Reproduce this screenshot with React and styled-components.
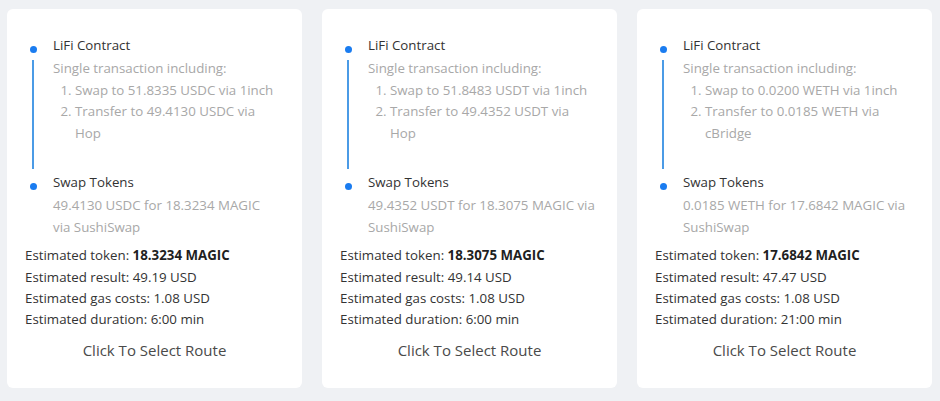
import React from "react";
import styled, { createGlobalStyle } from "styled-components";

const GlobalStyle = createGlobalStyle`
  html, body {
    margin: 0;
    padding: 0;
    background: #eff1f4;
    font-family: "Open Sans", "Noto Sans", sans-serif;
  }
`;

// lines are kept as they wrap in the design
const routes = [
  {
    swap: "51.8335 USDC",
    transfer: "49.4130 USDC",
    bridge: "Hop",
    tokens: ["49.4130 USDC for 18.3234 MAGIC", "via SushiSwap"],
    token: "18.3234 MAGIC",
    result: "49.19 USD",
    gas: "1.08 USD",
    duration: "6:00 min",
  },
  {
    swap: "51.8483 USDT",
    transfer: "49.4352 USDT",
    bridge: "Hop",
    tokens: ["49.4352 USDT for 18.3075 MAGIC via", "SushiSwap"],
    token: "18.3075 MAGIC",
    result: "49.14 USD",
    gas: "1.08 USD",
    duration: "6:00 min",
  },
  {
    swap: "0.0200 WETH",
    transfer: "0.0185 WETH",
    bridge: "cBridge",
    tokens: ["0.0185 WETH for 17.6842 MAGIC via", "SushiSwap"],
    token: "17.6842 MAGIC",
    result: "47.47 USD",
    gas: "1.08 USD",
    duration: "21:00 min",
  },
];

const RouteCard = ({ route }) => (
  <Card>
    <Steps>
      <Step>
        <Rail>
          <Dot />
          <Tail />
        </Rail>
        <StepBody $last={false}>
          <StepTitle>LiFi Contract</StepTitle>
          <StepDesc>
            Single transaction including:
            <Ol>
              <li>Swap to {route.swap} via 1inch</li>
              <li>
                Transfer to {route.transfer} via
                <br />
                {route.bridge}
              </li>
            </Ol>
          </StepDesc>
        </StepBody>
      </Step>
      <Step>
        <Rail>
          <Dot />
        </Rail>
        <StepBody $last>
          <StepTitle>Swap Tokens</StepTitle>
          <StepDesc>
            {route.tokens[0]}
            <br />
            {route.tokens[1]}
          </StepDesc>
        </StepBody>
      </Step>
    </Steps>
    <Info>
      <div>
        Estimated token: <strong>{route.token}</strong>
      </div>
      <div>Estimated result: {route.result}</div>
      <div>Estimated gas costs: {route.gas}</div>
      <div>Estimated duration: {route.duration}</div>
    </Info>
    <SelectButton>Click To Select Route</SelectButton>
  </Card>
);

const App = () => {
  return (
    <>
      <GlobalStyle />
      <Page>
        {routes.map((r, i) => (
          <RouteCard key={i} route={r} />
        ))}
      </Page>
    </>
  );
};

export default App;

const Page = styled.div`
  display: grid;
  grid-template-columns: repeat(3, 1fr);
  gap: 20px;
  padding: 9px 8px 13px 7px;
  height: 401px;
  box-sizing: border-box;
  align-items: start;
`;

const Card = styled.div`
  background: #fff;
  border-radius: 6px;
  padding: 26px 18px 22px 18px;
  height: 379px;
  box-sizing: border-box;
  display: flex;
  flex-direction: column;
  font-size: 13.3px;
  line-height: 21.8px;
  white-space: nowrap;
`;

const Steps = styled.div`
  display: flex;
  flex-direction: column;
`;

const Step = styled.div`
  display: flex;
`;

const Rail = styled.div`
  width: 16px;
  flex: none;
  display: flex;
  flex-direction: column;
  align-items: center;
  margin-right: 12px;
`;

const Dot = styled.span`
  width: 7px;
  height: 7px;
  border-radius: 50%;
  background: #1a7cf0;
  margin-top: 11px;
  flex: none;
`;

const Tail = styled.span`
  flex: 1;
  width: 2px;
  background: #4b9be6;
  margin: 7px 0 3px;
`;

const StepBody = styled.div`
  flex: 1;
  padding-bottom: ${(p) => (p.$last ? "7px" : "27px")};
`;

const StepTitle = styled.div`
  color: #333;
  margin-bottom: 1px;
`;

const StepDesc = styled.div`
  color: #a8a8a8;
`;

const Ol = styled.ol`
  margin: 0;
  padding-left: 22px;
`;

const Info = styled.div`
  color: #333;
  line-height: 21.3px;
  strong {
    color: #1f1f1f;
    font-weight: 700;
  }
`;

const SelectButton = styled.button`
  align-self: center;
  margin-top: 4px;
  height: 32px;
  padding: 0 15px;
  border: none;
  background: transparent;
  color: #4a4a4a;
  font-family: inherit;
  font-size: 15px;
  cursor: pointer;
`;
